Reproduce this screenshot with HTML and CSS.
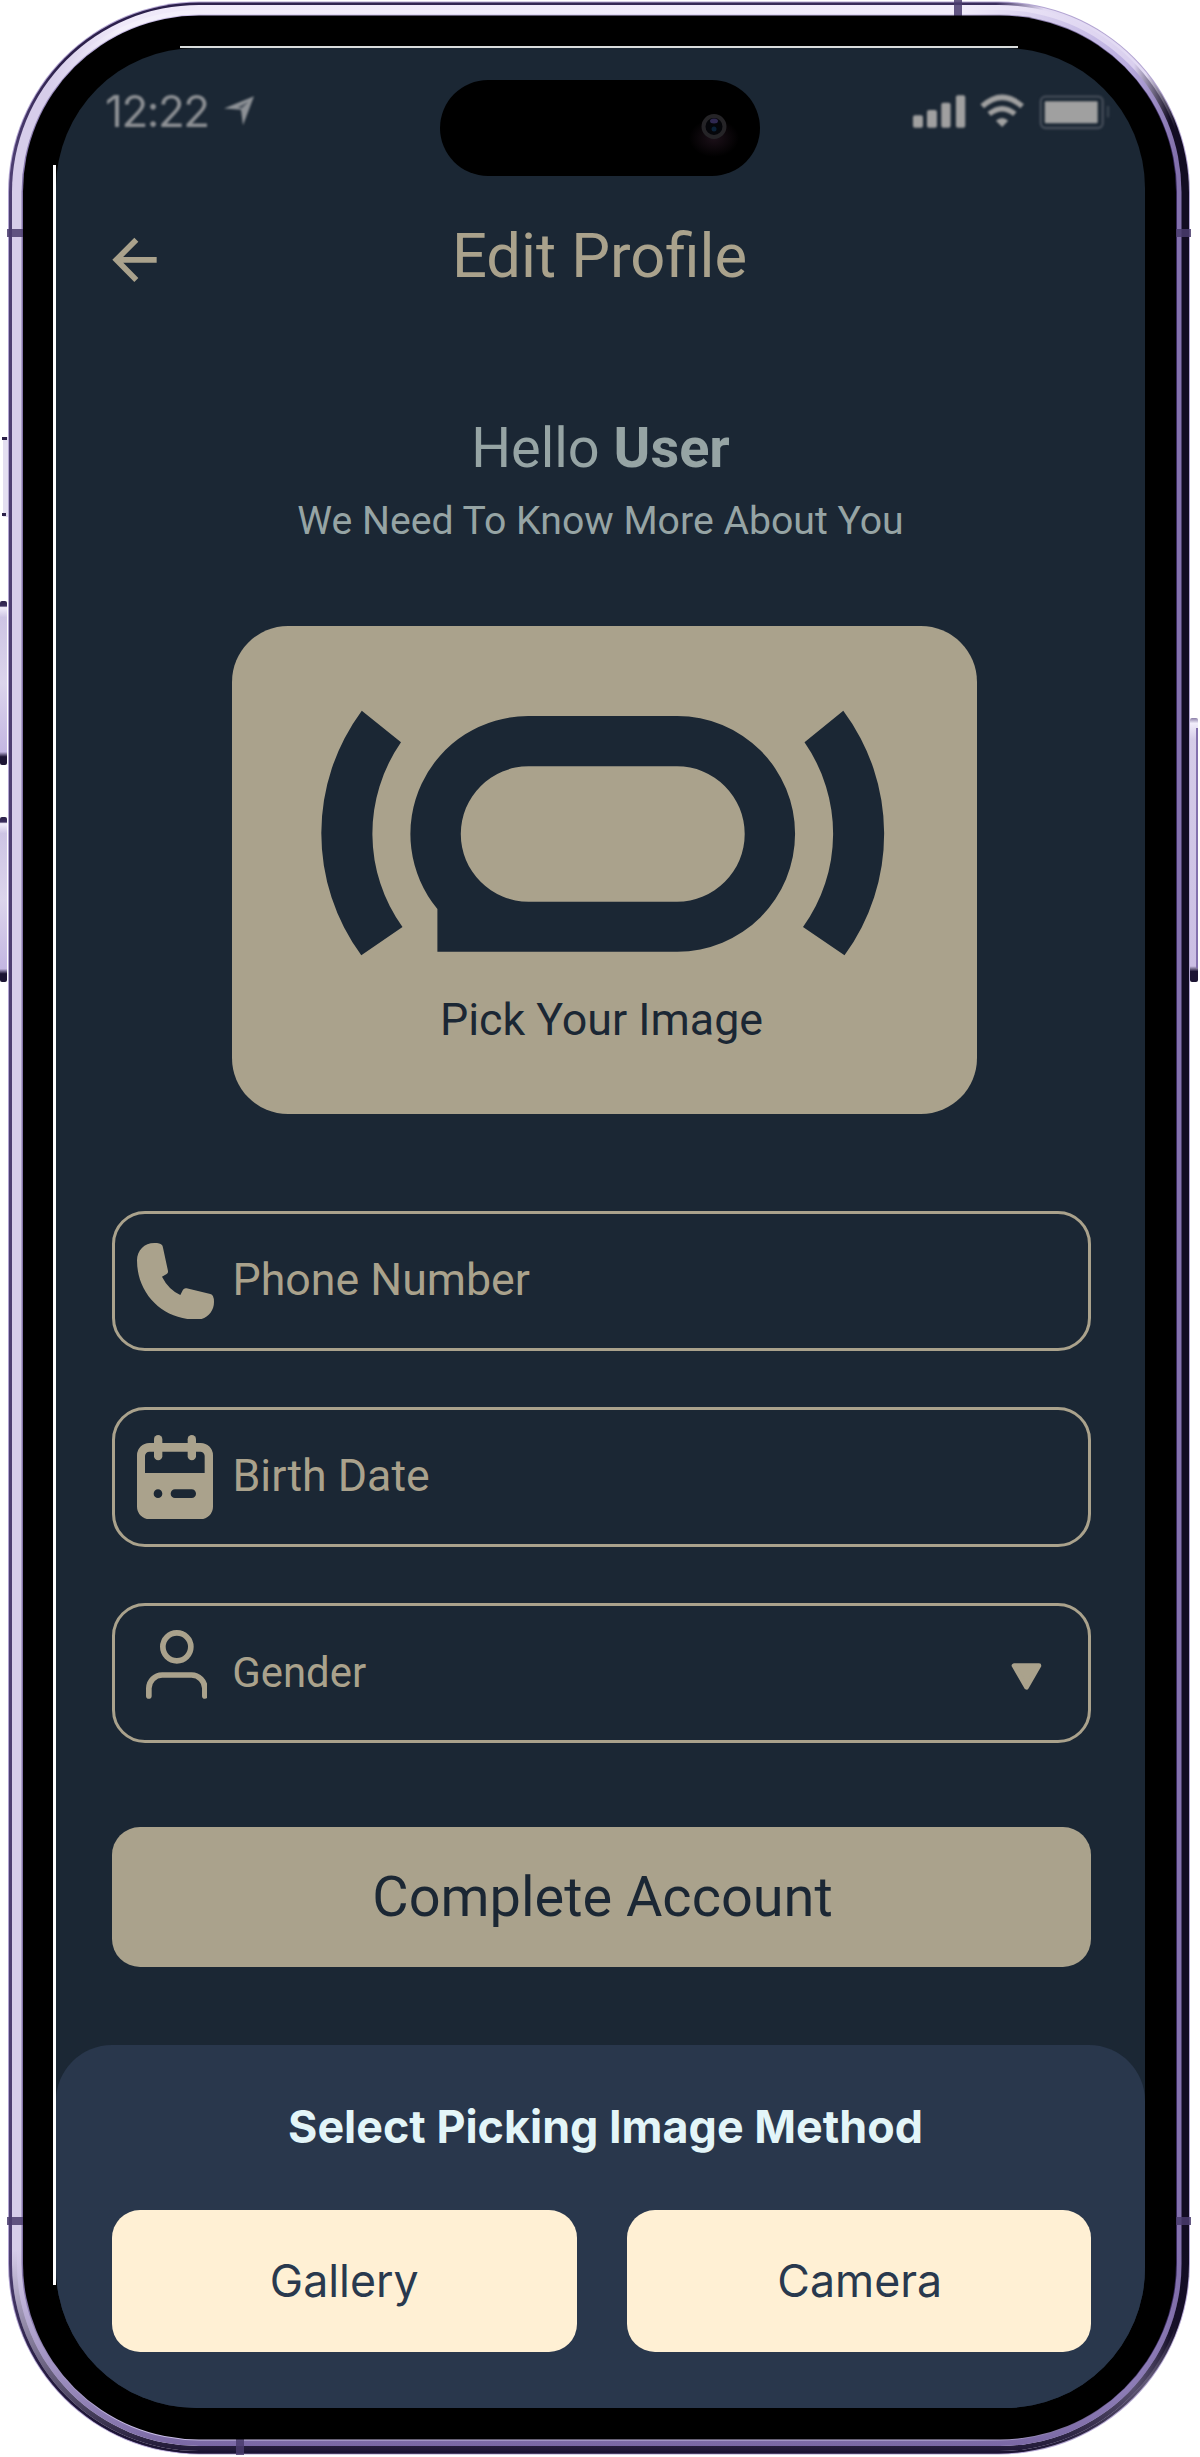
FILE: index.html
```html
<!DOCTYPE html>
<html lang="en">
<head>
<meta charset="utf-8">
<title>Edit Profile</title>
<link rel="stylesheet" href="styles.css">
</head>
<body>
<div class="device">
  <svg class="frame" viewBox="0 0 1200 2457" aria-hidden="true">
    <defs>
      <linearGradient id="rim" gradientUnits="userSpaceOnUse" x1="0" y1="0" x2="1200" y2="0">
        <stop offset="0" stop-color="#54457a"/><stop offset=".05" stop-color="#2b1f4a"/><stop offset=".83" stop-color="#3a2d5c"/>
        <stop offset=".87" stop-color="#e2daf3"/><stop offset=".955" stop-color="#e2daf3"/><stop offset=".98" stop-color="#120c22"/>
      </linearGradient>
      <linearGradient id="band" gradientUnits="userSpaceOnUse" x1="0" y1="0" x2="1200" y2="0">
        <stop offset="0" stop-color="#d6cdea"/><stop offset=".04" stop-color="#d6cdea"/><stop offset=".1" stop-color="#efe9f9"/>
        <stop offset=".8" stop-color="#f1ecfa"/><stop offset=".945" stop-color="#d9cfee"/><stop offset=".975" stop-color="#120c22"/>
      </linearGradient>
      <linearGradient id="bandInner" gradientUnits="userSpaceOnUse" x1="0" y1="0" x2="1200" y2="0">
        <stop offset="0" stop-color="#d6cdea"/><stop offset=".04" stop-color="#d6cdea"/><stop offset=".1" stop-color="#f3effb"/>
        <stop offset=".8" stop-color="#f1ecfa"/><stop offset=".94" stop-color="#bbaee0"/><stop offset=".98" stop-color="#8371ad"/>
      </linearGradient>
      <linearGradient id="lip" gradientUnits="userSpaceOnUse" x1="0" y1="0" x2="1200" y2="0">
        <stop offset="0" stop-color="#75659c"/><stop offset=".1" stop-color="#c9bde6"/><stop offset=".8" stop-color="#c9bde6"/><stop offset=".97" stop-color="#35265a"/>
      </linearGradient>
      <linearGradient id="fadeDark" gradientUnits="userSpaceOnUse" x1="0" y1="2250" x2="0" y2="2454">
        <stop offset="0" stop-color="#1c1433" stop-opacity="0"/><stop offset=".75" stop-color="#1c1433" stop-opacity=".75"/><stop offset="1" stop-color="#1c1433"/>
      </linearGradient>
      <linearGradient id="fadePurple" gradientUnits="userSpaceOnUse" x1="0" y1="2250" x2="0" y2="2445">
        <stop offset="0" stop-color="#7a68a5" stop-opacity="0"/><stop offset="1" stop-color="#7a68a5"/>
      </linearGradient>
      <linearGradient id="key" x1="0" y1="0" x2="0" y2="1">
        <stop offset="0" stop-color="#2c2148"/><stop offset=".03" stop-color="#3a2d5c"/><stop offset=".04" stop-color="#f2eefb"/><stop offset=".1" stop-color="#cdc4e4"/>
        <stop offset=".5" stop-color="#dcd5ec"/><stop offset=".92" stop-color="#c3b6e2"/><stop offset=".95" stop-color="#1c1433"/><stop offset="1" stop-color="#1c1433"/>
      </linearGradient>
      <linearGradient id="power" x1="0" y1="0" x2="0" y2="1">
        <stop offset="0" stop-color="#8b7fa8"/><stop offset=".02" stop-color="#f2eefb"/><stop offset=".08" stop-color="#d5cce8"/>
        <stop offset=".94" stop-color="#cbbfe4"/><stop offset=".96" stop-color="#1c1433"/><stop offset="1" stop-color="#1c1433"/>
      </linearGradient>
      <radialGradient id="glow"><stop offset="0" stop-color="#1c1019"/><stop offset="1" stop-color="#000"/></radialGradient>
    </defs>
    <rect x="3" y="437" width="5" height="80" fill="#e4dff1"/>
    <path d="M2 438.500h5M2 514.500h4" stroke="#2c2148" stroke-width="3"/>
    <rect x="0" y="601" width="7" height="164" rx="2" fill="url(#key)"/>
    <rect x="0" y="817" width="7" height="165" rx="2" fill="url(#key)"/>
    <rect x="1190" y="718" width="8" height="264" rx="2" fill="url(#power)"/>
    <path d="M1197 728V968" stroke="#8371ad" stroke-width="2"/>
    <rect x="8" y="1.5" width="1182" height="2453" rx="191" fill="#b3a5d2"/>
    <rect x="9" y="2.5" width="1180" height="2451" rx="190" fill="url(#rim)"/>
    <rect x="9" y="2.5" width="1180" height="2451" rx="190" fill="url(#fadeDark)"/>
    <rect x="12" y="5" width="1174" height="2446" rx="187" fill="url(#band)"/>
    <rect x="12" y="5" width="1174" height="2446" rx="187" fill="url(#fadeDark)"/>
    <rect x="17" y="10" width="1164.500" height="2436" rx="182" fill="url(#bandInner)"/>
    <rect x="17" y="10" width="1164.500" height="2436" rx="182" fill="url(#fadePurple)"/>
    <rect x="21.500" y="14.500" width="1155.500" height="2426" rx="178" fill="url(#lip)"/>
    <path d="M7 233H23M7 2221H23M1176 233H1191M1176 2221H1191M958 0V16M240 2439V2455" stroke="#4a3c6d" stroke-opacity=".85" stroke-width="8"/>
    <rect x="23" y="15.500" width="1153" height="2424" rx="176"/>
    <path d="M54.500 165V2285" stroke="#fff" stroke-width="3"/>
    <path d="M180 47H1018" stroke="#d9dcdc" stroke-width="2"/>
  </svg>

  <main class="screen">
    <div class="status">
      <div class="status-left">
        <span class="clock">12:22</span>
        <svg class="locate" viewBox="672 282 96 92"><path d="M765 285L732 372L726 326L675 322Z" fill="#8d9196"/><path d="M748 302L716 318L729 322Z" fill="#4e5660"/></svg>
      </div>
      <svg class="status-right" viewBox="332 284 598 108">
        <g fill="#a0a0a0">
          <rect x="335" y="348" width="30" height="37" rx="6"/><rect x="377" y="332" width="30" height="53" rx="6"/>
          <rect x="420" y="310" width="28" height="75" rx="6"/><rect x="464" y="288" width="28" height="97" rx="6"/>
          <path d="M603 383L584 364Q603 348 621 364Z"/>
          <rect x="731" y="306" width="159" height="66" rx="3"/>
        </g>
        <g fill="none" stroke="#a0a0a0" stroke-width="16"><path d="M543 321Q603 267 663 321"/><path d="M564 344Q603 312 641 344"/></g>
        <rect x="719" y="292" width="186" height="94" rx="14" fill="none" stroke="#454d59" stroke-width="7"/>
        <path d="M921 320V354" stroke="#39434f" stroke-width="7"/>
      </svg>
    </div>

    <header class="topbar">
      <svg class="back" viewBox="336 712 135 138"><path d="M470 780.500H349M409 720L349 780.500L409 841" fill="none" stroke="#aaa28c" stroke-width="17"/></svg>
      <h1 class="title">Edit Profile</h1>
    </header>

    <section class="greeting">
      <p class="hello">Hello <b>User</b></p>
      <p class="sub">We Need To Know More About You</p>
    </section>

    <section class="picker">
      <svg class="logo" viewBox="321 710 564 246" fill="#1b2734">
        <path d="M361.800 710.700L401 742.300A160 160 0 0 0 402.500 927L361.300 955.300A206 206 0 0 1 361.800 710.700Z"/>
        <path d="M843.300 710.700L804.500 742.300A160 160 0 0 1 803 927L844.500 955.300A206 206 0 0 0 843.300 710.700Z"/>
        <path fill-rule="evenodd" d="M528.300 716H677.300A117.850 117.850 0 0 1 677.300 951.700H437.400V909A117.900 117.900 0 0 1 528.300 716ZM528.500 766.300A67.700 67.700 0 0 0 528.500 901.700H677A67.700 67.700 0 0 0 677 766.300Z"/>
      </svg>
      <span class="picker-label">Pick Your Image</span>
    </section>

    <form class="form">
      <label class="field">
        <svg class="i-phone" viewBox="141 156 231 230"><path fill="#aaa28c" d="M193 156C205 156 212 158 215 161Q218 163 219 170L234 240Q235 246 230 249L216 257Q235 295 271 312L279 296Q283 290 290 292L361 309Q367 310 369 316Q372 322 372 333C372 362 350 386 320 386C220 386 141 310 141 208C141 178 163 156 193 156Z"/></svg>
        <span class="field-text">Phone Number</span>
      </label>
      <label class="field">
        <svg class="i-date" viewBox="141 735 228 252" fill="#aaa28c">
          <path fill-rule="evenodd" d="M178 759H332A37 37 0 0 1 369 796V950A37 37 0 0 1 332 987H178A37 37 0 0 1 141 950V796A37 37 0 0 1 178 759ZM178 785A13 13 0 0 0 165 798V849H344V798A13 13 0 0 0 331 785ZM204 898A13 13 0 0 0 204 924A13 13 0 0 0 204 898ZM255 898A13 13 0 0 0 255 924H305A13 13 0 0 0 305 898Z"/>
          <rect x="192" y="735" width="25" height="76" rx="12.500"/><rect x="293" y="735" width="25" height="76" rx="12.500"/>
        </svg>
        <span class="field-text">Birth Date</span>
      </label>
      <label class="field">
        <svg class="i-user" viewBox="166 150 185 207" fill="none" stroke="#aaa28c" stroke-width="17" stroke-linecap="round"><circle cx="258.500" cy="200.500" r="42"/><path d="M174.500 348V325A40 40 0 0 1 214.500 285H302.500A40 40 0 0 1 342.500 325V348"/></svg>
        <span class="field-text small">Gender</span>
        <svg class="i-caret" viewBox="334 248 92 82"><path d="M342 256H418L380 322Z" fill="#aaa28c" stroke="#aaa28c" stroke-width="14" stroke-linejoin="round"/></svg>
      </label>
      <button class="submit" type="button">Complete Account</button>
    </form>

    <section class="sheet">
      <h2 class="sheet-title">Select Picking Image Method</h2>
      <div class="choices">
        <button class="choice" type="button">Gallery</button>
        <button class="choice" type="button">Camera</button>
      </div>
    </section>
  </main>

  <svg class="island" viewBox="0 0 320 96" aria-hidden="true">
    <rect width="320" height="96" rx="48"/>
    <ellipse cx="274" cy="58" rx="25" ry="19" fill="url(#glow)"/>
    <circle cx="274" cy="46.500" r="10.500" fill="#05060a" stroke="#252427" stroke-width="4"/>
    <ellipse cx="274" cy="41" rx="4" ry="2.500" fill="#2f2850"/><circle cx="274" cy="49" r="2.500" fill="#0a2138"/>
  </svg>
</div>
</body>
</html>
```
FILE: styles.css
```css
* { box-sizing: border-box; }
body { margin: 0; background: #fff; font-family: Roboto, "Liberation Sans", sans-serif; }
h1, h2, p { margin: 0; font-weight: 400; }
svg { display: block; flex: none; }
button { border: 0; padding: 0; font: inherit; }

.device { position: relative; width: 1200px; height: 2457px; padding: 48px 55px 49px 56px; overflow: hidden; }
.frame { position: absolute; inset: 0; width: 1200px; height: 2457px; }
.island { position: absolute; left: 440px; top: 80px; width: 320px; height: 96px; }

.screen { position: relative; display: flex; flex-direction: column; height: 2360px; background: #1b2734; border-radius: 140px; overflow: hidden; }

.status { display: flex; justify-content: space-between; align-items: center; height: 128px; padding: 0 34px 0 49px; filter: blur(.8px); }
.status-left { display: flex; align-items: center; gap: 17px; }
.clock { font: 400 44px/52px Inter, sans-serif; letter-spacing: -1.5px; color: #8d9094; margin-top: -2px; }
.locate { width: 32px; height: 31px; margin: -4px 0 0 -3px; }
.status-right { width: 199px; height: 36px; }

.topbar { display: grid; grid-template-columns: 1fr auto 1fr; align-items: center; height: 72px; margin-top: 44px; padding: 0 58px 0 56px; }
.back { width: 45px; height: 46px; margin-top: 8px; }
.title { color: #aaa28c; font-size: 61.500px; line-height: 72px; }

.greeting { margin-top: 124px; text-align: center; color: #96a4a4; }
.hello { font-size: 55.9px; line-height: 64px; }
.sub { margin-top: 18px; font-size: 39.2px; line-height: 46px; }

.picker { display: flex; flex-direction: column; align-items: center; width: 745px; height: 487.500px; margin: 82px 0 0 176px; padding: 84px 3px 0 0; background: #aaa28c; border-radius: 56px; color: #1b2734; }
.logo { width: 564px; height: 246px; }
.picker-label { margin: 36px 3px 0 0; font-size: 44.8px; line-height: 56px; }

.form { display: flex; flex-direction: column; gap: 56px; margin: 97.500px 54px 0 56px; }
.field { display: flex; align-items: center; height: 140px; padding: 0 46px 0 22px; border: 3px solid #aaa28c; border-radius: 33px; color: #aaa28c; font-size: 44.7px; line-height: 52px; }
.field-text { margin-top: -3px; }
.field-text.small { font-size: 41.9px; margin-top: -1px; }
.i-phone { width: 77px; height: 76.700px; margin-right: 18.500px; }
.i-date { width: 76px; height: 84px; margin-right: 19.500px; }
.i-user { width: 61.700px; height: 69px; margin: -17px 25px 0 8.500px; }
.i-caret { width: 31px; height: 27px; margin: 6px 0 0 auto; }
.submit { height: 140px; margin-top: 27.500px; padding-left: 2px; background: #aaa28c; border-radius: 28px; color: #1b2734; font-size: 55.9px; }

.sheet { flex: 1; margin-top: 78px; padding: 55px 54px 0 56px; background: #29374c; border-radius: 56px 56px 0 0; font-family: Inter, sans-serif; font-size: 44.7px; }
.sheet-title { padding-left: 8px; color: #e3f5f8; font-size: 44.85px; font-weight: 700; line-height: 54px; text-align: center; white-space: nowrap; }
.choices { display: grid; grid-template-columns: 1fr 1fr; gap: 50px; margin-top: 56.500px; }
.choice { height: 142px; background: #fff0d4; border-radius: 28px; color: #29394e; }
.choice + .choice { padding-left: 2px; }
```
